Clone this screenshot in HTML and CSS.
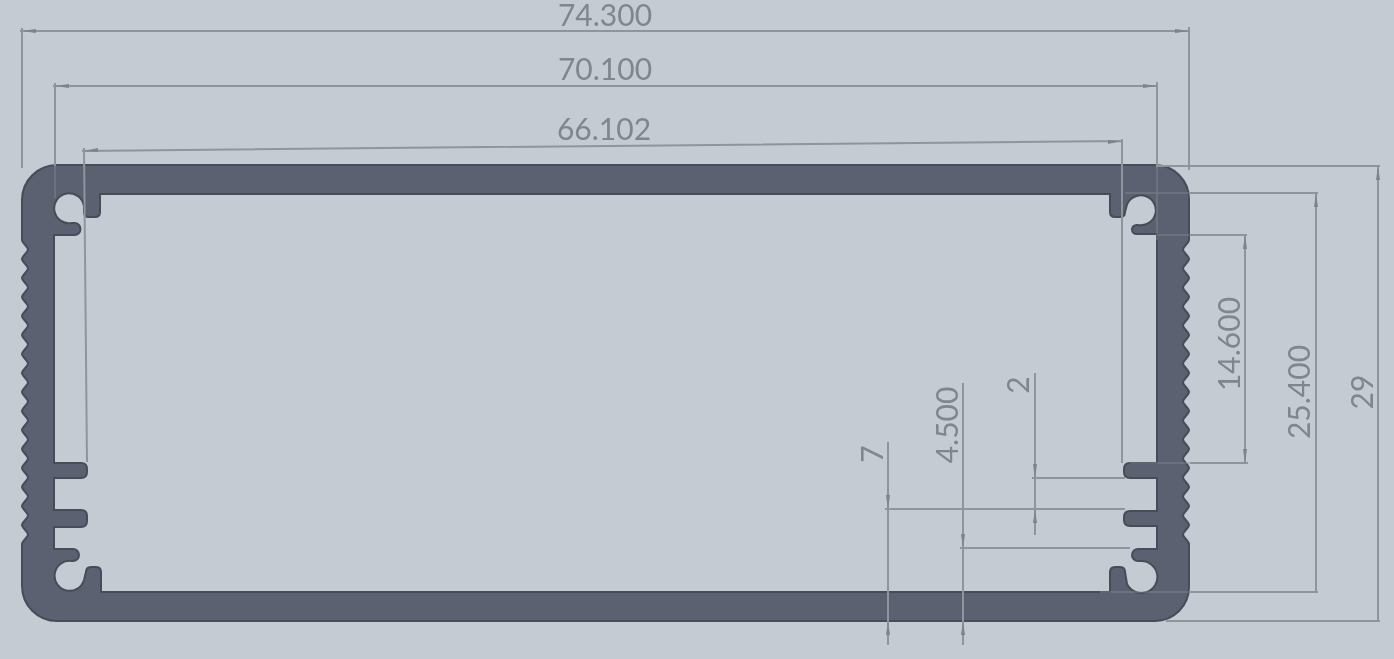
FILE: index.html
```html
<!DOCTYPE html>
<html lang="en">
<head>
  <meta charset="UTF-8">
  <meta name="viewport" content="width=device-width, initial-scale=1.0">
  <title>Aluminium Enclosure Profile</title>
  <link rel="stylesheet" href="styles.css">
</head>
<body>
  <svg class="drawing" width="1394" height="659" viewBox="0 0 1394 659">
    <!-- Extrusion profile -->
    <path class="profile" fill-rule="evenodd" d="M57 165H1155A34 34 0 0 1 1189 199V240
      c0 3-6 6.500-6 9.500c0 3 6 6.500 6 9.500c0 3-6 6.500-6 9.500c0 3 6 6.500 6 9.500c0 3-6 6.500-6 9.500c0 3 6 6.500 6 9.500c0 3-6 6.500-6 9.500c0 3 6 6.500 6 9.500
      c0 3-6 6.500-6 9.500c0 3 6 6.500 6 9.500c0 3-6 6.500-6 9.500c0 3 6 6.500 6 9.500c0 3-6 6.500-6 9.500c0 3 6 6.500 6 9.500c0 3-6 6.500-6 9.500c0 3 6 6.500 6 9.500
      c0 3-6 6.500-6 9.500c0 3 6 6.500 6 9.500c0 3-6 6.500-6 9.500c0 3 6 6.500 6 9.500c0 3-6 6.500-6 9.500c0 3 6 6.500 6 9.500c0 3-6 6.500-6 9.500c0 3 6 6.500 6 9.500
      c0 3-6 6.500-6 9.500c0 3 6 6.500 6 9.500c0 3-6 6.500-6 9.500c0 3 6 6.500 6 9.500c0 3-6 6.500-6 9.500c0 3 6 6.500 6 9.500c0 3-6 6.500-6 9.500c0 3 6 6.500 6 9.500
      V587A34 34 0 0 1 1155 621H57A35 35 0 0 1 22 586V544
      c0-3 6-6.500 6-9.500c0-3-6-6.500-6-9.500c0-3 6-6.500 6-9.500c0-3-6-6.500-6-9.500c0-3 6-6.500 6-9.500c0-3-6-6.500-6-9.500c0-3 6-6.500 6-9.500c0-3-6-6.500-6-9.500
      c0-3 6-6.500 6-9.500c0-3-6-6.500-6-9.500c0-3 6-6.500 6-9.500c0-3-6-6.500-6-9.500c0-3 6-6.500 6-9.500c0-3-6-6.500-6-9.500c0-3 6-6.500 6-9.500c0-3-6-6.500-6-9.500
      c0-3 6-6.500 6-9.500c0-3-6-6.500-6-9.500c0-3 6-6.500 6-9.500c0-3-6-6.500-6-9.500c0-3 6-6.500 6-9.500c0-3-6-6.500-6-9.500c0-3 6-6.500 6-9.500c0-3-6-6.500-6-9.500
      c0-3 6-6.500 6-9.500c0-3-6-6.500-6-9.500c0-3 6-6.500 6-9.500c0-3-6-6.500-6-9.500c0-3 6-6.500 6-9.500c0-3-6-6.500-6-9.500c0-3 6-6.500 6-9.500c0-3-6-6.500-6-9.500
      V200A35 35 0 0 1 57 165Z
      M101 194H1110V212q0 5 5 5h5q5 0 5-5L1126 208A15 15 0 1 1 1138 225H1136.5a4.500 4.500 0 0 0 0 9H1157V463
      H1130q-6 0-6 6v3q0 6 6 6H1157V511H1130q-6 0-6 6v3q0 6 6 6H1157V549H1138a6 6 0 0 0 0 12H1141
      A16 16 0 1 1 1127 584L1125 572q0-5-5-5h-5q-5 0-5 5V592H101V572q0-5-5-5h-5q-5 0-5 5L84 580
      A15 15 0 1 1 72 561H73a6 6 0 0 0 0-12H54V527H81q6 0 6-6v-5q0-6-6-6H54V478H81q6 0 6-6v-3q0-6-6-6H54V235H74.500
      a6 6 0 0 0 0-12H72A15 15 0 1 1 84 206V212q0 5 5 5h6q5 0 5-5V194Z"/>

    <!-- Parts of the dimension lines that run across the metal -->
    <g class="dim-line-faint">
      <path d="M55 165V198M1157 165V240"/>
      <path d="M1125 193H1190M1157 235H1190M1130 463H1190M1100 592H1190"/>
    </g>

    <!-- Dimension lines -->
    <g class="dim-line">
      <path d="M22 28V168M20 31H1189M1189 27V170"/>
      <path d="M55 83V166M53 86H1157M1157 82V166"/>
      <path d="M84 148L87 462M82 151L1122 141M1122 139V463"/>
      <path d="M1156 166H1380M1378 166V621M1166 621H1380"/>
      <path d="M1190 193H1318M1316 193V592M1190 592H1318"/>
      <path d="M1190 235H1247M1245 235V463M1190 463H1248"/>
      <path d="M888 442V645M885 509H1125"/>
      <path d="M963 383V645M960 548H1130"/>
      <path d="M1035 373V535M1032 478H1125"/>
    </g>

    <!-- Arrow heads -->
    <g class="dim-arrow">
      <path d="M22 31l14-2v4zM1189 31l-14-2v4z"/>
      <path d="M55 86l14-2v4zM1157 86l-14-2v4z"/>
      <path d="M84 151l14-3v4zM1122 141l-14-1v4z"/>
      <path d="M1378 166l-2 14h4zM1316 193l-2 14h4zM1245 235l-2 14h4zM1245 463l-2-14h4z"/>
      <path d="M888 509l-2-14h4zM888 621l-2 14h4zM963 548l-2-14h4zM963 621l-2 14h4z"/>
      <path d="M1035 478l-2-14h4zM1035 509l-2 14h4z"/>
    </g>

    <!-- Dimension values -->
    <g class="dim-text">
      <text x="605" y="26">74.300</text>
      <text x="605" y="80">70.100</text>
      <text x="604" y="140">66.102</text>
      <text transform="translate(1240 344) rotate(-90)">14.600</text>
      <text transform="translate(1310 392) rotate(-90)">25.400</text>
      <text transform="translate(1373 392) rotate(-90)">29</text>
      <text transform="translate(883 454) rotate(-90)">7</text>
      <text transform="translate(958 425) rotate(-90)">4.500</text>
      <text transform="translate(1029 385) rotate(-90)">2</text>
    </g>
  </svg>
</body>
</html>
```
FILE: styles.css
```css
body {
  margin: 0;
  background: #c4cbd3;
  overflow: hidden;
}

/* the source is a soft scan, so the whole drawing is slightly blurred */
.drawing {
  display: block;
  filter: blur(0.6px);
}

.profile {
  fill: #5b6170;
  stroke: #474c59;
  stroke-width: 2;
}

.dim-line {
  fill: none;
  stroke: #8e959c;
  stroke-width: 2;
}

.dim-line-faint {
  fill: none;
  stroke: #8e959c;
  stroke-width: 1.5;
  opacity: 0.45;
}

.dim-arrow {
  fill: #7d848c;
}

.dim-text {
  font-family: Lato, "Liberation Sans", sans-serif;
  font-size: 30px;
  font-weight: 400;
  fill: #7f868d;
  text-anchor: middle;
}
```
